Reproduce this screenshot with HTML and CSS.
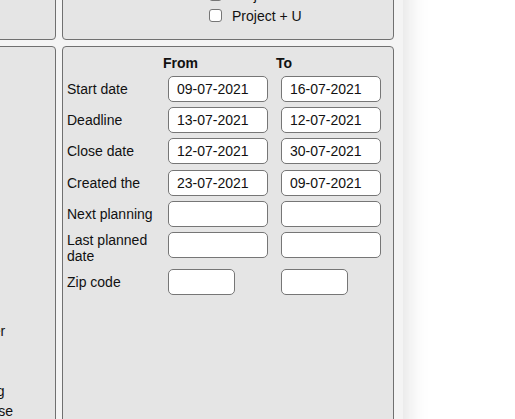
FILE: index.html
```html
<!DOCTYPE html>
<html lang="en">
<head>
    <meta charset="UTF-8">
    <meta name="viewport" content="width=device-width, initial-scale=1.0">
    <title>Search filters</title>
    <link rel="stylesheet" href="styles.css">
</head>
<body>
    <div class="filters">
        <div class="panel"></div>
        <div class="panel projects">
            <label class="check"><input type="checkbox"> Project + P</label>
            <label class="check"><input type="checkbox"> Project + U</label>
        </div>
        <div class="panel fields">
            <ul>
                <li>Name</li>
                <li>Code</li>
                <li>Type</li>
                <li>Status</li>
                <li>Owner</li>
                <li>Team</li>
                <li>City</li>
                <li>Region</li>
                <li>Phone</li>
                <li>Email</li>
                <li>Agent</li>
                <li>Notes</li>
                <li>Group</li>
                <li>Manager</li>
                <li>Sales</li>
                <li>Admin</li>
                <li>Shipping</li>
                <li>Response</li>
            </ul>
        </div>
        <div class="panel ranges">
            <div class="range-grid">
                <span></span>
                <span class="col-head">From</span>
                <span class="col-head">To</span>

                <span class="label">Start date</span>
                <input type="text" value="09-07-2021">
                <input type="text" value="16-07-2021">

                <span class="label">Deadline</span>
                <input type="text" value="13-07-2021">
                <input type="text" value="12-07-2021">

                <span class="label">Close date</span>
                <input type="text" value="12-07-2021">
                <input type="text" value="30-07-2021">

                <span class="label">Created the</span>
                <input type="text" value="23-07-2021">
                <input type="text" value="09-07-2021">

                <span class="label">Next planning</span>
                <input type="text">
                <input type="text">

                <span class="label">Last planned date</span>
                <input type="text">
                <input type="text">

                <span class="label">Zip code</span>
                <input type="text" class="short">
                <input type="text" class="short">
            </div>
        </div>
    </div>
</body>
</html>
```

FILE: styles.css
```css
body {
    font-family: "Liberation Sans", Arial, sans-serif;
    font-size: 14px;
    color: #111;
    margin: 0;
    background: #fff;
    overflow: hidden;
    height: 100vh;
}

.filters {
    display: grid;
    grid-template-columns: 110px 332px;
    grid-template-rows: 90px 440px;
    gap: 6px;
    width: fit-content;
    padding: 8px 9px 8px 8px;
    margin: -58px 0 0 -62px;
    background-color: #f4f4f4;
    box-shadow: 4px 0 22px rgba(0, 0, 0, 0.12);
}

.panel {
    background-color: #e5e5e5;
    border: 1px solid #707070;
    border-radius: 4px;
    box-sizing: border-box;
}

.projects {
    display: flex;
    flex-direction: column;
    justify-content: flex-end;
    padding: 0 0 13px 146px;
}

.check {
    display: flex;
    align-items: center;
    gap: 10px;
    height: 21px;
}

.check input {
    appearance: none;
    width: 13px;
    height: 13px;
    margin: 0;
    background: #fff;
    border: 1px solid #767676;
    border-radius: 3px;
}

.fields ul {
    list-style-type: none;
    margin: 0;
    padding: 14px 0 0 3px;
    line-height: 20px;
}

.ranges {
    padding: 8px 0 0 4px;
}

.range-grid {
    display: grid;
    grid-template-columns: 101px 113px 100px;
    row-gap: 5.2px;
}

.col-head {
    font-weight: bold;
    line-height: 16px;
    margin-left: -5px;
    margin-bottom: -0.2px;
}

.label {
    line-height: 16px;
    align-self: center;
}

.range-grid input {
    align-self: start;
    width: 100px;
    height: 26px;
    box-sizing: border-box;
    margin: 0;
    padding: 0 8px;
    font-family: inherit;
    font-size: 14px;
    color: #111;
    background: #fff;
    border: 1px solid #767676;
    border-radius: 5px;
}

.range-grid input.short {
    width: 67px;
}
```
